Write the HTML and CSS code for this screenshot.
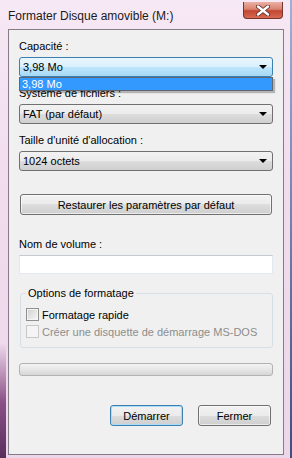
FILE: index.html
```html
<!DOCTYPE html>
<html lang="fr">
<head>
  <meta charset="UTF-8">
  <title>Formater Disque amovible (M:)</title>
  <link rel="stylesheet" href="styles.css">
</head>
<body>
  <div class="fenetre">
    <div class="titre">
      <span class="titre-texte">Formater Disque amovible (M:)</span>
      <div class="fermer-x">
        <svg width="16" height="11" viewBox="0 0 16 11">
          <path d="M3 1.5 L13 9.5 M13 1.5 L3 9.5" stroke="#5a2a26" stroke-width="4" stroke-linecap="round"/>
          <path d="M3 1.5 L13 9.5 M13 1.5 L3 9.5" stroke="#fff" stroke-width="2.4" stroke-linecap="round"/>
        </svg>
      </div>
    </div>

    <div class="client">
      <div class="champ">
        <label>Capacité :</label>
        <div class="combo actif">
          <span>3,98 Mo</span>
          <span class="fleche"></span>
          <div class="liste">3,98 Mo</div>
        </div>
      </div>
      <div class="champ">
        <label>Système de fichiers :</label>
        <div class="combo">
          <span>FAT (par défaut)</span>
          <span class="fleche"></span>
        </div>
      </div>
      <div class="champ">
        <label>Taille d'unité d'allocation :</label>
        <div class="combo">
          <span>1024 octets</span>
          <span class="fleche"></span>
        </div>
      </div>

      <button class="bouton restaurer">Restaurer les paramètres par défaut</button>

      <div class="champ volume">
        <label>Nom de volume :</label>
        <div class="saisie"></div>
      </div>

      <fieldset class="options">
        <legend>Options de formatage</legend>
        <div class="case-ligne">
          <span class="case"></span>
          <span>Formatage rapide</span>
        </div>
        <div class="case-ligne inactif">
          <span class="case"></span>
          <span>Créer une disquette de démarrage MS-DOS</span>
        </div>
      </fieldset>

      <div class="progression"></div>

      <div class="actions">
        <button class="bouton defaut">Démarrer</button>
        <button class="bouton">Fermer</button>
      </div>
    </div>
  </div>
</body>
</html>
```

FILE: styles.css
```css
body {
  margin: 0;
  font-family: 'Liberation Sans', Arial, sans-serif;
  font-size: 11px;
  color: #000;
}
.fenetre {
  width: 292px;
  height: 458px;
  box-sizing: border-box;
  display: flex;
  flex-direction: column;
  padding: 0 8px 3px 8px;
  background:
    linear-gradient(to bottom, transparent 75%, #8a4f86 88%, #5a2f5c) left top / 6px 100% no-repeat,
    linear-gradient(to bottom, #9fb0d6, #3e4f7e) right top / 2px 100% no-repeat,
    linear-gradient(to bottom, #f7e8f5, #f1dcee 40%, #ecd6ea);
}
.titre {
  height: 29px;
  flex: none;
  display: flex;
  justify-content: space-between;
  align-items: flex-start;
}
.titre-texte {
  font-size: 12px;
  line-height: 14px;
  margin-top: 9px;
  color: #1a1a1a;
}
.fermer-x {
  width: 38px;
  height: 16px;
  margin-top: 2px;
  margin-right: 1px;
  border: 1px solid #7a3430;
  border-top: none;
  border-radius: 0 0 4px 4px;
  background: linear-gradient(to bottom, #eab0a4, #d8826f 45%, #c24632 55%, #d66a52);
  display: flex;
  align-items: center;
  justify-content: center;
}
.client {
  flex: 1;
  background: #f0f0f0;
  border: 1px solid #857c88;
  padding: 9px 10px 0 10px;
  display: flex;
  flex-direction: column;
}
.champ {
  display: flex;
  flex-direction: column;
  gap: 4px;
  margin-bottom: 9px;
}
.champ label {
  line-height: 14px;
}
.combo {
  position: relative;
  height: 20px;
  box-sizing: border-box;
  border: 1px solid #707070;
  border-radius: 3px;
  background: linear-gradient(to bottom, #f2f2f2, #ebebeb 50%, #dddddd 50%, #cfcfcf);
  display: flex;
  align-items: center;
  justify-content: space-between;
  padding: 0 4px 0 3px;
}
.combo.actif {
  border-color: #3c7fb1;
  background: linear-gradient(to bottom, #eaf6fd, #d9f0fc 50%, #bee6fd 50%, #a7d9f5);
}
.fleche {
  width: 0;
  height: 0;
  border-left: 4px solid transparent;
  border-right: 4px solid transparent;
  border-top: 4px solid #000;
  margin-right: 1px;
}
.liste {
  position: absolute;
  top: 19px;
  left: -1px;
  right: -1px;
  height: 14px;
  box-sizing: border-box;
  border: 1px solid #5f6670;
  background: #3399ff;
  color: #fff;
  line-height: 12px;
  padding-left: 2px;
  box-shadow: 2px 2px 1px rgba(0, 0, 0, 0.25);
  z-index: 2;
}
.bouton {
  font-family: inherit;
  font-size: 11px;
  color: #000;
  height: 21px;
  border: 1px solid #707070;
  border-radius: 3px;
  background: linear-gradient(to bottom, #f2f2f2, #ebebeb 50%, #dddddd 50%, #cfcfcf);
  box-shadow: inset 0 0 0 1px rgba(255, 255, 255, 0.6);
  padding: 0;
}
.restaurer {
  margin: 14px 1px 0 1px;
}
.volume {
  margin-top: 22px;
  margin-bottom: 12px;
}
.saisie {
  height: 19px;
  box-sizing: border-box;
  background: #fff;
  border: 1px solid #e3e9ef;
  border-top-color: #c4c8cf;
}
.options {
  margin: 0 0 0 1px;
  padding: 0 5px 6px 5px;
  border: 1px solid #d5dfe5;
  border-radius: 3px;
  height: 62px;
  box-sizing: border-box;
}
.options legend {
  padding: 0 2px;
  line-height: 14px;
}
.case-ligne {
  height: 17px;
  display: flex;
  align-items: center;
  gap: 3px;
}
.case-ligne:first-of-type {
  margin-top: 6px;
}
.case {
  width: 13px;
  height: 13px;
  box-sizing: border-box;
  border: 1px solid #8e8f8f;
  background: linear-gradient(135deg, #cfcfcf, #f7f7f7);
  box-shadow: inset 0 0 0 1px #f4f4f4;
}
.inactif {
  color: #8d8d8d;
}
.inactif .case {
  border-color: #c8c8c8;
  background: #f4f4f4;
}
.progression {
  margin-top: 15px;
  height: 13px;
  box-sizing: border-box;
  border: 1px solid #b2b2b2;
  border-radius: 3px;
  background: linear-gradient(to bottom, #f3f3f3, #e6e6e6 50%, #d6d6d6);
}
.actions {
  margin-top: 29px;
  display: flex;
  justify-content: flex-end;
  gap: 15px;
  padding-right: 2px;
}
.actions .bouton {
  width: 73px;
}
.defaut {
  border-color: #3c7fb1;
  box-shadow: inset 0 0 0 1px #a9dcf6;
}
```
